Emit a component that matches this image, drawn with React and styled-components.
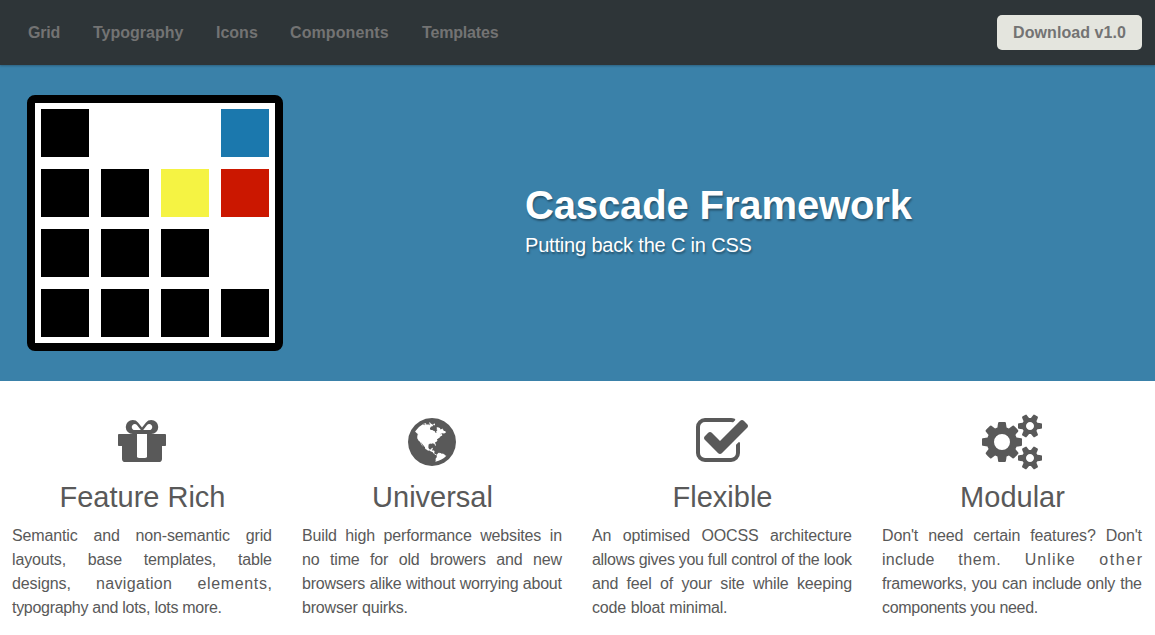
import React from "react";
import styled, { createGlobalStyle } from "styled-components";

const GlobalStyle = createGlobalStyle`
  *, *::before, *::after { box-sizing: border-box; }
  body {
    margin: 0;
    background: #fff;
    color: #595959;
    font: 16px/24px "Liberation Sans", Arial, sans-serif;
    overflow: hidden;
  }
  h1, h2, p { margin: 0; }
`;

const Header = styled.header`
  position: relative;
  display: flex;
  align-items: center;
  justify-content: space-between;
  height: 65px;
  padding: 0 13px 0 12px;
  background: #2e3538;
  box-shadow: 0 1px 2px rgba(0, 0, 0, 0.25);
`;

const Nav = styled.nav`
  display: flex;
`;

const NavLink = styled.a`
  width: ${({ $width }) => $width}px;
  padding-left: 16px;
  color: #737373;
  font-weight: bold;
  letter-spacing: ${({ $track }) => $track || 0}px;
  white-space: nowrap;
`;

const DownloadButton = styled.a`
  width: 145px;
  height: 35px;
  border-radius: 5px;
  background: #e4e5de;
  color: #737373;
  font-weight: bold;
  letter-spacing: 0.06px;
  line-height: 35px;
  text-align: center;
  white-space: nowrap;
`;

const Hero = styled.section`
  display: flex;
  align-items: center;
  height: 316px;
  padding-left: 27px;
  background: #3a81a9;
`;

const Logo = styled.div`
  display: grid;
  grid-template-columns: repeat(4, 48px);
  grid-auto-rows: 48px;
  gap: 12px;
  width: 256px;
  height: 256px;
  padding: 6px;
  border: 8px solid #000;
  border-radius: 8px;
  background: #fff;
`;

const Cell = styled.span`
  background: ${({ $color }) => $color};
`;

const HeroText = styled.div`
  margin: 0 0 3px 242px;
  color: #fff;
  text-shadow: 1px 2px 2px rgba(0, 0, 0, 0.35);
  white-space: nowrap;
`;

const Title = styled.h1`
  font-size: 40px;
  line-height: 48px;
  letter-spacing: -0.13px;
`;

const Tagline = styled.p`
  font-size: 20px;
  line-height: 33px;
  letter-spacing: -0.18px;
`;

const Features = styled.main`
  display: grid;
  grid-template-columns: repeat(4, 260px);
  column-gap: 30px;
  padding: 33px 12px 0;
`;

const Feature = styled.article`
  display: flex;
  flex-direction: column;
  align-items: center;
`;

const Icon = styled.svg`
  width: ${({ $width }) => $width}px;
  height: 56px;
  overflow: visible;
  fill: #595959;
`;

const FeatureTitle = styled.h2`
  margin: 7px 0 7px;
  padding-left: 1px;
  font-size: 29px;
  font-weight: normal;
  line-height: 40px;
`;

const Copy = styled.p`
  width: 260px;
`;

const Line = styled.span`
  display: block;
  width: ${({ $width }) => ($width ? `${$width}px` : "auto")};
  letter-spacing: ${({ $track }) => $track}px;
  text-align: justify;
  text-align-last: justify;
  white-space: nowrap;
`;

const Word = styled.span`
  letter-spacing: ${({ $track }) => $track}px;

  &:last-child {
    margin-right: ${({ $track }) => -$track}px;
  }
`;

const GIFT =
  "M1056 1356v-716h-320v716q0 25 18 38.500t46 13.500h192q28 0 46-13.500t18-38.500zM664 512h195l-126-161q-26-31-69-31-40 0-68 28t-28 68 28 68 68 28zM1224 416q0-40-28-68t-68-28q-43 0-69 31l-125 161h194q40 0 68-28t28-68zM1664 672v320q0 14-9 23t-23 9h-96v416q0 40-28 68t-68 28h-1088q-40 0-68-28t-28-68v-416h-96q-14 0-23-9t-9-23v-320q0-14 9-23t23-9h440q-93 0-158.500-65.500t-65.500-158.500 65.500-158.500 158.500-65.500q107 0 168 77l128 165 128-165q61-77 168-77 93 0 158.500 65.500t65.500 158.500-65.500 158.500-158.500 65.500h440q14 0 23 9t9 23z";

const GLOBE =
  "M896 128q209 0 385.500 103t279.500 279.500 103 385.500-103 385.500-279.500 279.500-385.500 103-385.500-103-279.500-279.500-103-385.500 103-385.500 279.500-279.500 385.500-103zm274 521q-2 1-9.500 9.500t-13.500 9.500q2 0 4.500-5t5-11 3.500-7q6-7 22-15 14-6 52-12 34-8 51 11-2-2 9.500-13t14.500-12q3-2 15-4.500t15-7.500l2-22q-12 1-17.500-7t-6.500-21q0 2-6 8 0-7-4.500-8t-11.500 1-9 1q-10-3-15-7.500t-8-16.500-4-15q-2-5-9.500-11t-9.500-10q-1-2-2.500-5.500t-3-6.500-4-5.500-5.500-2.500-7 5-7.500 10-4.500 5q-3-2-6-1.500t-4.500 1-4.500 3-5 3.500q-3 2-8.500 3t-8.500 2q15-5-1-11-10-4-16-3 9-4 7.500-12t-8.500-14h5q-1-4-8.500-8.500t-17.500-8.500-13-6q-8-5-34-9.500t-33-.5q-5 6-4.500 10.500t4 14 3.500 12.500q1 6-5.500 13t-6.500 12q0 7 14 15.500t10 21.500q-3 8-16 16t-16 12q-5 8-1.500 18.500t10.500 16.500q2 2 1.500 4t-3.500 4.500-5.500 4-6.500 3.500l-3 2q-11 5-20.500-6t-13.500-26q-7-25-16-30-23-8-29 1-5-13-41-26-25-9-58-4 6-1 0-15-7-15-19-12 3-6 4-17.500t1-13.500q3-13 12-23 1-1 7-8.500t9.500-13.500.5-6q35 4 50-11 5-5 11.500-17t10.500-17q9-6 14-5.500t14.500 5.500 14.500 5q14 1 15.500-11t-7.500-20q12 1 3-17-4-7-8-9-12-4-27 5-8 4 2 8-1-1-9.500 10.500t-16.500 17.500-16-5q-1-1-5.500-13.500t-9.500-13.500q-8 0-16 15 3-8-11-15t-24-8q19-12-8-27-7-4-20.500-5t-19.500 4q-5 7-5.500 11.500t5 8 10.500 5.500 11.500 4 8.500 3q14 10 8 14-2 1-8.500 3.500t-11.500 4.500-6 4q-3 4 0 14t-2 14q-5-5-9-17.500t-7-16.500q7 9-25 6l-10-1q-4 0-16 2t-20.500 1-13.500-8q-4-8 0-20 1-4 4-2-4-3-11-9.500t-10-8.500q-46 15-94 41 6 1 12-1 5-2 13-6.500t10-5.500q34-14 42-7l5-5q14 16 20 25-7-4-30-1-20 6-22 12 7 12 5 18-4-3-11.500-10t-14.500-11-15-5q-16 0-22 1-146 80-235 222 7 7 12 8 4 1 5 9t2.500 11 11.500-3q9 8 3 19 1-1 44 27 19 17 21 21 3 11-10 18-1-2-9-9t-9-4q-3 5 .5 18.500t10.500 12.500q-7 0-9.500 16t-2.500 35.500-1 23.500l2 1q-3 12 5.500 34.500t21.500 19.500q-13 3 20 43 6 8 8 9 3 2 12 7.500t15 10 10 10.500q4 5 10 22.500t14 23.500q-2 6 9.500 20t10.500 23q-1 0-2.500 1t-2.500 1q3 7 15.500 14t15.500 13q1 3 2 10t3 11 8 2q2-20-24-62-15-25-17-29-3-5-5.500-15.500t-4.500-14.500q2 0 6 1.500t8.500 3.500 7.500 4 2 3q-3 7 2 17.500t12 18.500 17 19 12 13q6 6 14 19.500t0 13.500q9 0 20 10t17 20q5 8 8 26t5 24q2 7 8.500 13.500t12.500 9.500l16 8 13 7q5 2 18.500 10.500t21.500 11.500q10 4 16 4t14.500-2.500 13.500-3.500q15-2 29 15t21 21q36 19 55 11-2 1 .5 7.500t8 15.500 9 14.500 5.500 8.500q5 6 18 15t18 15q6-4 7-9-3 8 7 20t18 10q14-3 14-32-31 15-49-18 0-1-2.500-5.500t-4-8.500-2.500-8.500 0-7.500 5-3q9 0 10-3.500t-2-12.500-4-13q-1-8-11-20t-12-15q-5 9-16 8t-16-9q0 1-1.500 5.500t-1.500 6.500q-13 0-15-1 1-3 2.500-17.500t3.500-22.500q1-4 5.500-12t7.500-14.500 4-12.500-4.500-9.500-17.500-2.500q-19 1-26 20-1 3-3 10.500t-5 11.500-9 7q-7 3-24 2t-24-5q-13-8-22.500-29t-9.500-37q0-10 2.500-26.500t3-25-5.500-24.500q3-2 9-9.500t10-10.500q2-1 4.500-1.500t4.500 0 4-1.500 3-6q-1-1-4-3-3-3-4-3 7 3 28.500-1.500t27.500 1.500q15 11 22-2 0-1-2.500-9.500t-.5-13.500q5 27 29 9 3 3 15.500 5t17.500 5q3 2 7 5.500t5.500 4.500 5-.5 8.500-6.500q10 14 12 24 11 40 19 44 7 3 11 2t4.500-9.500 0-14-1.500-12.500l-1-8v-18l-1-8q-15-3-18.500-12t1.500-18.500 15-18.500q1-1 8-3.500t15.500-6.500 12.500-8q21-19 15-35 7 0 11-9-1 0-5-3t-7.500-5-4.500-2q9-5 2-16 5-3 7.500-11t7.500-10q9 12 21 2 8-8 1-16 5-7 20.500-10.500t18.500-9.500q7 2 8-2t1-12 3-12q4-5 15-9t13-5l17-11q3-4 0-4 18 2 31-11 10-11-6-20 3-6-3-9.500t-15-5.500q3-1 11.500-.5t10.500-1.500q15-10-7-16-17-5-43 12zm-163 877q206-36 351-189-3-3-12.500-4.500t-12.500-3.500q-18-7-24-8 1-7-2.500-13t-8-9-12.500-8-11-7q-2-2-7-6t-7-5.500-7.500-4.500-8.500-2-10 1l-3 1q-3 1-5.500 2.500t-5.500 3-4 3 0 2.500q-21-17-36-22-5-1-11-5.500t-10.500-7-10-1.500-11.500 7q-5 5-6 15t-2 13q-7-5 0-17.500t2-18.500q-3-6-10.500-4.500t-12 4.500-11.500 8.500-9 6.500-8.500 5.500-8.500 7.500q-3 4-6 12t-5 11q-2-4-11.500-6.500t-9.500-5.500q2 10 4 35t5 38q7 31-12 48-27 25-29 40-4 22 12 26 0 7-8 20.500t-7 21.500q0 6 2 16z";

const CHECK =
  "M1472 930v318q0 119-84.500 203.500t-203.500 84.500h-832q-119 0-203.500-84.500t-84.500-203.500v-832q0-119 84.500-203.500t203.500-84.500h832q63 0 117 25 15 7 18 23 3 17-9 29l-49 49q-10 10-23 10-3 0-9-2-23-6-45-6h-832q-66 0-113 47t-47 113v832q0 66 47 113t113 47h832q66 0 113-47t47-113v-254q0-13 9-22l64-64q10-10 23-10 6 0 12 3 20 8 20 29zM1703 441l-814 814q-24 24-57 24t-57-24l-430-430q-24-24-24-57t24-57l110-110q24-24 57-24t57 24l263 263 647-647q24-24 57-24t57 24l110 110q24 24 24 57t-24 57z";

const SMALL_COG =
  "v140q0 16-149 31-12 27-30 52 51 113 51 138 0 4-4 7-122 71-124 71-8 0-46-47t-52-68q-20 2-30 2t-30-2q-14 21-52 68t-46 47q-2 0-124-71-4-3-4-7 0-25 51-138-18-25-30-52-149-15-149-31v-140q0-16 149-31 13-29 30-52-51-113-51-138 0-4 4-7 4-2 35-20t59-34 30-16q8 0 46 46.500t52 67.500q20-2 30-2t30 2q51-71 92-112l6-2q4 0 124 70 4 3 4 7 0 25-51 138 17 23 30 52 149 15 149 31z";

const COGS =
  "M896 896q0-106-75-181t-181-75-181 75-75 181 75 181 181 75 181-75 75-181zM1664 1408q0-52-38-90t-90-38-90 38-38 90q0 53 37.500 90.500t90.500 37.500 90.500-37.500 37.500-90.500zM1664 384q0-52-38-90t-90-38-90 38-38 90q0 53 37.500 90.500t90.500 37.500 90.500-37.500 37.500-90.500zM1280 805v185q0 10-7 19.500t-16 10.500l-155 24q-11 35-32 76 34 48 90 115 7 11 7 20 0 12-7 19-23 30-82.500 89.500t-78.500 59.500q-11 0-21-7l-115-90q-37 19-77 31-11 108-23 155-7 24-30 24h-186q-11 0-20-7.500t-10-17.500l-23-153q-34-10-75-31l-118 89q-7 7-20 7-11 0-21-8-144-133-144-160 0-9 7-19 10-14 41-53t47-61q-23-44-35-82l-152-24q-10-1-17-9.500t-7-19.500v-185q0-10 7-19.500t16-10.500l155-24q11-35 32-76-34-48-90-115-7-11-7-20 0-12 7-20 22-30 82-89t79-59q11 0 21 7l115 90q34-18 77-32 11-108 23-154 7-24 30-24h186q11 0 20 7.500t10 17.500l23 153q34 10 75 31l118-89q8-7 20-7 11 0 21 8 144 133 144 160 0 8-7 19-12 16-42 54t-45 60q23 48 34 82l152 23q10 2 17 10.500t7 19.500zM1920 1338" +
  SMALL_COG +
  "M1920 314" +
  SMALL_COG;

const NAV = [
  { label: "Grid", width: 65, track: -0.2 },
  { label: "Typography", width: 123 },
  { label: "Icons", width: 74 },
  { label: "Components", width: 132, track: 0.1 },
  { label: "Templates", width: 110, track: -0.17 },
];

const K = "#000";
const W = "#fff";
const CELLS = [
  K, W, W, "#1b78ad",
  K, K, "#f5f343", "#cb1700",
  K, K, K, W,
  K, K, K, K,
];

const FEATURES = [
  {
    title: "Feature Rich",
    icon: GIFT,
    lines: [
      { text: "Semantic and non-semantic grid" },
      { text: "layouts, base templates, table" },
      { text: "designs, navigation elements,", tracks: [-0.1, 0.35, 0.65] },
      { text: "typography and lots, lots more.", width: 210, track: -0.3 },
    ],
  },
  {
    title: "Universal",
    icon: GLOBE,
    lines: [
      { text: "Build high performance websites in" },
      { text: "no time for old browers and new" },
      { text: "browsers alike without worrying about", track: -0.22 },
      { text: "browser quirks.", width: 106, track: -0.18 },
    ],
  },
  {
    title: "Flexible",
    icon: CHECK,
    lines: [
      { text: "An optimised OOCSS architecture" },
      { text: "allows gives you full control of the look", track: -0.31 },
      { text: "and feel of your site while keeping" },
      { text: "code bloat minimal.", width: 135.5, track: -0.2 },
    ],
  },
  {
    title: "Modular",
    icon: COGS,
    iconUnits: 1920,
    lines: [
      { text: "Don't need certain features? Don't" },
      { text: "include them. Unlike other", tracks: [0.3, 0.6, 1.1, 1.6] },
      { text: "frameworks, you can include only the", track: -0.22 },
      { text: "components you need.", width: 156, track: -0.3 },
    ],
  },
];

function CopyLine({ text, width, track = -0.15, tracks = [] }) {
  return (
    <Line $width={width} $track={track}>
      {text.split(" ").map((word, i) => (
        <React.Fragment key={i}>
          {i > 0 && " "}
          <Word $track={tracks[i] ?? track}>{word}</Word>
        </React.Fragment>
      ))}
    </Line>
  );
}

export default function App() {
  return (
    <>
      <GlobalStyle />
      <Header>
        <Nav>
          {NAV.map(({ label, width, track }) => (
            <NavLink key={label} $width={width} $track={track}>
              {label}
            </NavLink>
          ))}
        </Nav>
        <DownloadButton>Download v1.0</DownloadButton>
      </Header>
      <Hero>
        <Logo>
          {CELLS.map((color, i) => (
            <Cell key={i} $color={color} />
          ))}
        </Logo>
        <HeroText>
          <Title>Cascade Framework</Title>
          <Tagline>Putting back the C in CSS</Tagline>
        </HeroText>
      </Hero>
      <Features>
        {FEATURES.map(({ title, icon, iconUnits = 1792, lines }) => (
          <Feature key={title}>
            <Icon $width={iconUnits / 32} viewBox={`0 0 ${iconUnits} 1792`}>
              <path d={icon} />
            </Icon>
            <FeatureTitle>{title}</FeatureTitle>
            <Copy>
              {lines.map((line) => (
                <CopyLine key={line.text} {...line} />
              ))}
            </Copy>
          </Feature>
        ))}
      </Features>
    </>
  );
}
